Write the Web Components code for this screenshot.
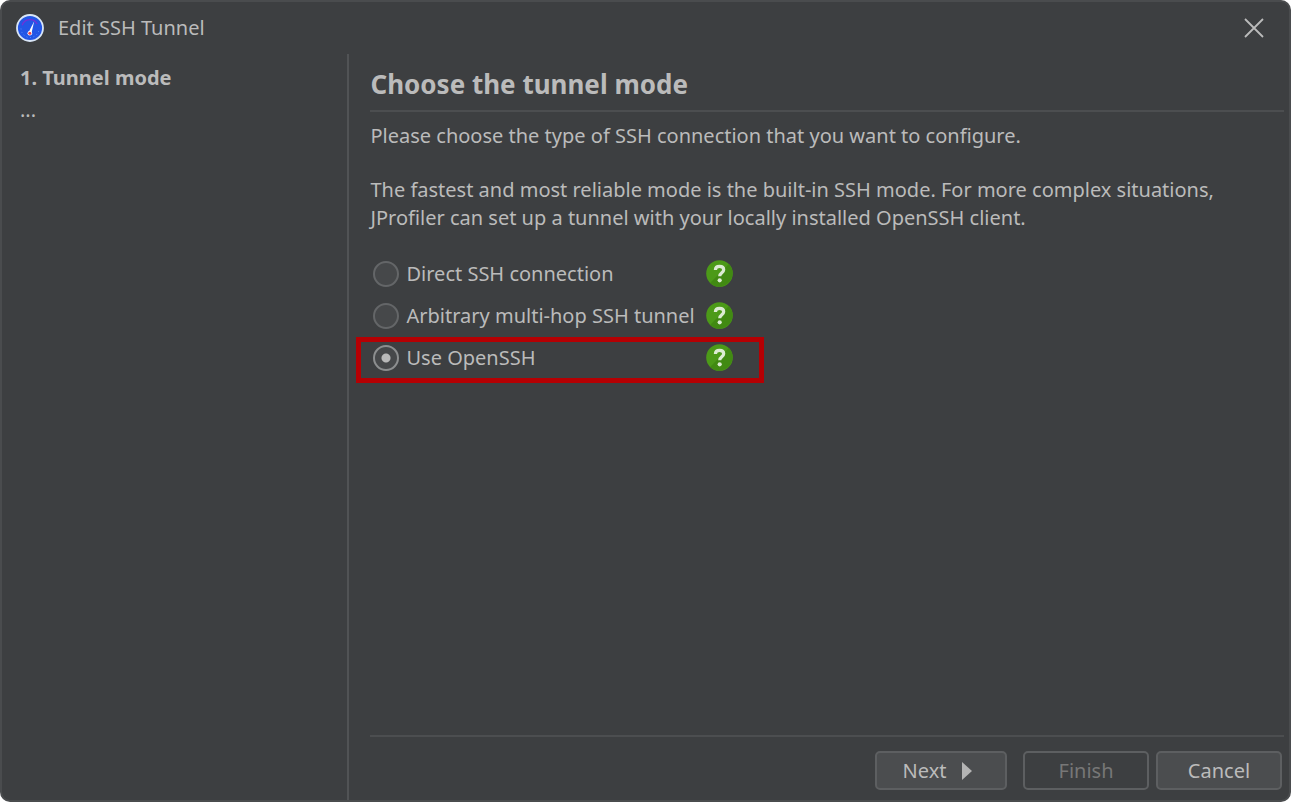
<!DOCTYPE html>
<html lang="en">
<head>
<meta charset="utf-8">
<title>Edit SSH Tunnel</title>
<style>
html{background:#fff}
body{margin:0;font:20px/28px "Noto Sans","Open Sans",sans-serif;color:#bbb}
</style>
</head>
<body>
<wizard-dialog>
  <title-bar slot="title">Edit SSH Tunnel</title-bar>
  <step-list slot="steps"></step-list>
  <wizard-page>
    <span slot="heading">Choose the tunnel mode</span>
    <text-block>Please choose the type of SSH connection that you want to configure.</text-block>
    <text-block>The fastest and most reliable mode is the built-in SSH mode. For more complex situations,<br>JProfiler can set up a tunnel with your locally installed OpenSSH client.</text-block>
    <option-group>
      <mode-option>Direct SSH connection</mode-option>
      <mode-option>Arbitrary multi-hop SSH tunnel</mode-option>
      <mode-option checked highlighted>Use OpenSSH</mode-option>
    </option-group>
  </wizard-page>
  <button-bar slot="buttons"></button-bar>
</wizard-dialog>
<script>
function define(name, html, setup) {
  customElements.define(name, class extends HTMLElement {
    constructor() {
      super();
      this.attachShadow({mode: 'open'}).innerHTML = html;
    }
    connectedCallback() { if (setup) setup(this, this.shadowRoot); }
  });
}

define('wizard-dialog', `
<style>
:host{display:flex;flex-direction:column;box-sizing:border-box;min-height:100vh;background:#3d3f41;border:2px solid #4a4c4e;border-radius:10px}
.body{flex:1;display:flex}
aside{flex:0 0 27%;border-right:2px solid #515355;box-sizing:border-box;padding:10px 18px}
main{flex:1;min-width:0;display:flex;flex-direction:column;padding:12px 5px 10px 21px}
.grow{flex:1}
</style>
<slot name="title"></slot>
<div class="body">
  <aside><slot name="steps"></slot></aside>
  <main><slot></slot><div class="grow"></div><slot name="buttons"></slot></main>
</div>`);

define('title-bar', `
<style>
:host{display:flex;align-items:center;height:52px;padding:0 20px 0 14px}
.logo{width:28px;height:28px;margin-right:14px}
h1{flex:1;margin:0;font:inherit}
button{display:flex;border:0;padding:4px;background:none;color:#bbb}
svg{display:block}
</style>
<svg class="logo" viewBox="0 0 28 28" aria-hidden="true">
  <circle cx="14" cy="14" r="13" fill="#2356e6" stroke="#d9e6f7" stroke-width="1.8"/>
  <path d="M6.2 11.2A8.2 8.2 0 0 1 21.2 10" fill="none" stroke="#7431d5" stroke-width="1.4"/>
  <path d="M5 14.5A9 9 0 0 0 23 14.5" fill="none" stroke="#5c92f5" stroke-width="1" stroke-dasharray="1 2.5"/>
  <path d="M18.2 7.2L12.6 18.2l2.8 1.3z" fill="#fff"/>
  <circle cx="13.8" cy="19.3" r="2.3" fill="#fff"/><circle cx="13.8" cy="19.3" r="1.5" fill="#ec4048"/>
</svg>
<h1><slot></slot></h1>
<button type="button" aria-label="Close"><svg width="22" height="22" viewBox="0 0 22 22"><path d="M2 2L20 20M20 2L2 20" fill="none" stroke="currentColor" stroke-width="1.8"/></svg></button>`);

define('step-list', `
<style>
:host{display:block}
ol{list-style:none;margin:0;padding:0}
li{margin-bottom:4px}
.current{font-weight:700}
</style>
<ol><li class="current" aria-current="step">1. Tunnel mode</li><li>...</li></ol>`);

define('wizard-page', `
<style>
:host{display:flex;flex-direction:column}
h2{margin:0 0 10px;padding-bottom:8px;border-bottom:2px solid #4c4e50;font-size:26px;line-height:36px;font-weight:700}
</style>
<h2><slot name="heading"></slot></h2><slot></slot>`);

define('text-block', `<style>:host{display:block;margin-bottom:26px}</style><slot></slot>`);

define('option-group', `
<style>:host{display:flex;flex-direction:column;gap:14px;width:360px;padding-left:3px;margin-top:2px}</style>
<slot></slot>`, host => host.addEventListener('option-picked', e => {
  for (const o of host.children) if (o !== e.target) o.shadowRoot.querySelector('input').checked = false;
}));

define('mode-option', `
<style>
:host{position:relative;display:flex;align-items:center;justify-content:space-between;height:28px}
label{display:flex;align-items:center;gap:7px;white-space:nowrap}
input{appearance:none;flex:none;width:26px;height:26px;margin:0;border:2px solid #646668;border-radius:50%;background:#46484a}
input:checked{border-color:#8c8e8f;background:radial-gradient(circle,#b9b9b9 4px,#46484a 5px)}
button{display:flex;align-self:flex-start;border:0;padding:0;background:none}
:host([highlighted])::after{content:"";position:absolute;inset:-7px -31px -11px -17px;border:5px solid #b50003;pointer-events:none}
</style>
<label><input type="radio"><span><slot></slot></span></label>
<button type="button" aria-label="Help">
<svg width="27" height="27" viewBox="0 0 27 27">
  <circle cx="13.5" cy="13.5" r="13.3" fill="#4c9a18"/>
  <path d="M22.9 4.1A13.3 13.3 0 0 1 4.1 22.9z" fill="#418a12"/>
  <path d="M9.4 10C9.4 7.5 11.1 6.3 13.5 6.3C16 6.3 17.7 7.6 17.7 9.8C17.7 12.8 13.7 12.8 13.7 16.3" fill="none" stroke="#dcebd3" stroke-width="3.2"/>
  <circle cx="13.7" cy="20.3" r="2.1" fill="#dcebd3"/>
</svg></button>`, (host, root) => {
  const input = root.querySelector('input');
  input.checked = host.hasAttribute('checked');
  input.addEventListener('change', () => host.dispatchEvent(new Event('option-picked', {bubbles: true})));
});

define('button-bar', `
<style>
:host{display:flex;justify-content:flex-end;border-top:2px solid #4c4e50;padding:14px 2px 0 0}
button{display:flex;align-items:center;justify-content:center;gap:16px;box-sizing:border-box;width:126px;height:39px;margin-left:7px;padding:0;border:2px solid #5d5f61;border-radius:5px;background:#4b4d4f;color:#bbb;font:inherit}
.next{width:132px;margin-right:9px;padding-right:6px}
button:disabled{background:none;color:#777}
</style>
<button type="button" class="next">Next<svg width="11" height="18" viewBox="0 0 11 18" aria-hidden="true"><path d="M0 0L10 9L0 18z" fill="#b4b4b4"/></svg></button>
<button type="button" disabled>Finish</button>
<button type="button">Cancel</button>`);
</script>
</body>
</html>
